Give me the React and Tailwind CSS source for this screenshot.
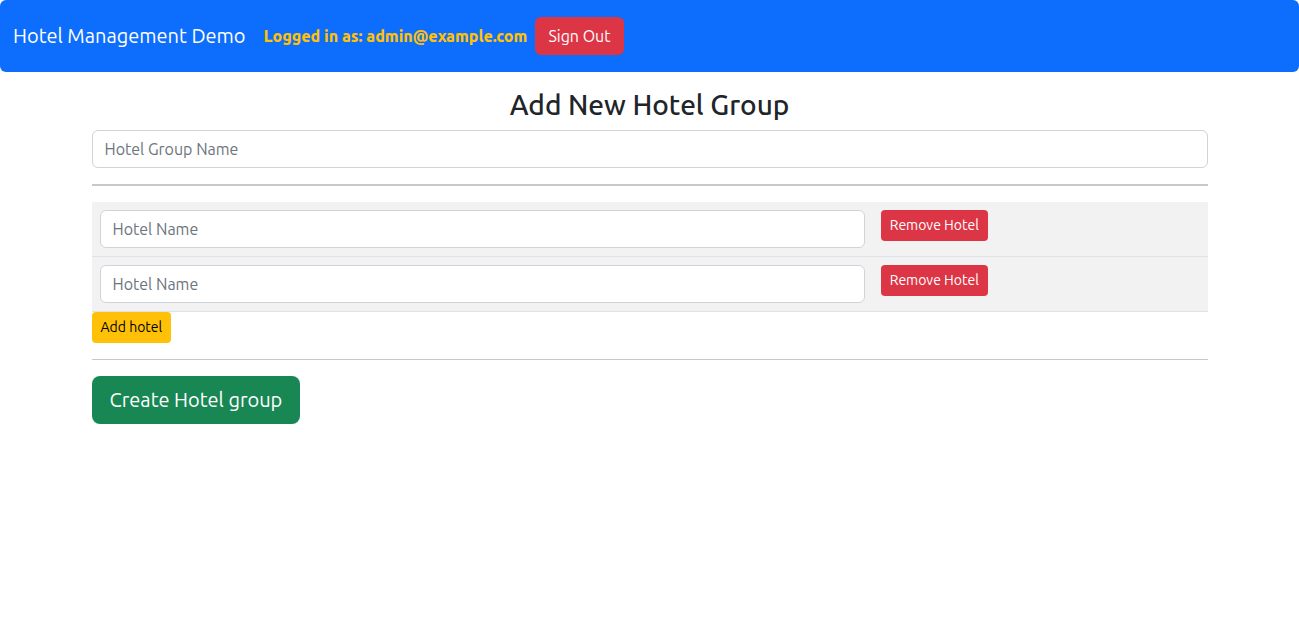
import { useState } from "react";

const inputClass =
  "block h-[38px] w-full rounded-md border border-[#ced4da] bg-white px-3 text-base text-[#212529] placeholder:text-[#6c757d]";

function Navbar() {
  return (
    <nav className="flex h-18 items-center rounded-md bg-[#0d6efd] px-[13px]">
      <a href="#" className="mr-[18px] text-xl whitespace-nowrap text-white">
        Hotel Management Demo
      </a>
      <span className="mr-2 font-extrabold whitespace-nowrap text-[#ffc107]">
        Logged in as: admin@example.com
      </span>
      <button
        type="button"
        className="h-[38px] rounded-md bg-[#dc3545] px-[13px] whitespace-nowrap text-white"
      >
        Sign Out
      </button>
    </nav>
  );
}

export default function App() {
  const [hotels, setHotels] = useState([1, 2]);

  return (
    <div className="min-h-screen bg-white font-['Ubuntu','Noto_Sans',sans-serif] text-base text-[#212529]">
      <Navbar />
      <main className="mx-auto mt-4 max-w-[1140px] px-3">
        <form onSubmit={(e) => e.preventDefault()}>
          <h1 className="mb-2 text-center text-[28px] leading-[34px] font-medium">
            Add New Hotel Group
          </h1>
          <input
            type="text"
            aria-label="Hotel Group Name"
            placeholder="Hotel Group Name"
            className={inputClass}
          />
          <hr className="my-4 h-0.5 border-0 bg-[#c7c8c9]" />
          <table className="w-full table-fixed border-collapse">
            <tbody>
              {hotels.map((id) => (
                <tr key={id} className="border-b border-[#dee2e6] bg-[#f2f2f2]">
                  <td className="w-[70%] p-2 align-top">
                    <input
                      type="text"
                      aria-label="Hotel Name"
                      placeholder="Hotel Name"
                      className={inputClass}
                    />
                  </td>
                  <td className="p-2 align-top">
                    <button
                      type="button"
                      onClick={() => setHotels(hotels.filter((h) => h !== id))}
                      className="block rounded-sm bg-[#dc3545] px-[9px] py-[5px] text-sm leading-[21px] whitespace-nowrap text-white"
                    >
                      Remove Hotel
                    </button>
                  </td>
                </tr>
              ))}
            </tbody>
          </table>
          <button
            type="button"
            onClick={() => setHotels([...hotels, Math.max(0, ...hotels) + 1])}
            className="block rounded-sm bg-[#ffc107] px-[9px] py-[5px] text-sm leading-[21px] text-black"
          >
            Add hotel
          </button>
          <hr className="my-4 h-px border-0 bg-[#c7c8c9]" />
          <button
            type="submit"
            className="block h-12 rounded-lg bg-[#198754] px-[18px] text-xl text-white"
          >
            Create Hotel group
          </button>
        </form>
      </main>
    </div>
  );
}
